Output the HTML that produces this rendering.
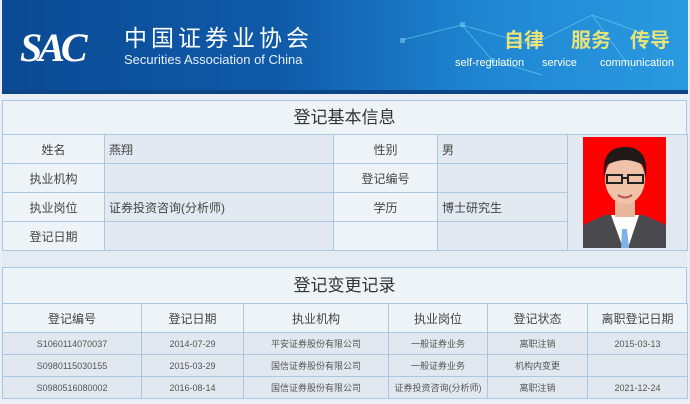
<!DOCTYPE html>
<html><head><meta charset="utf-8"><style>
*{margin:0;padding:0;box-sizing:border-box}
body{width:690px;height:404px;overflow:hidden;background:#e9eff5;font-family:"Liberation Sans","Noto Sans CJK SC",sans-serif;color:#333;position:relative}
.hdr{position:absolute;left:2px;top:0;width:686px;height:94px;background:linear-gradient(90deg,#0b4a94 0%,#0f5aa8 40%,#1f86d2 70%,#2a9ae0 100%);overflow:hidden}
.hdr .bot{position:absolute;left:0;right:0;bottom:0;height:4px;background:#0c4585}
.abs{position:absolute;line-height:1;white-space:nowrap}
table{border-collapse:collapse;position:absolute;left:2px;width:685px;table-layout:fixed}
td{border:1px solid #a9c6e3;text-align:center;font-size:12px;color:#444}
.t1 td{height:29px}
.lbl{background:#eef3f8}
.val{background:#e2e9f1;text-align:left;padding-left:4px}
.title{position:absolute;left:2px;width:685px;text-align:center;font-size:17px;color:#333;background:#eef3f8;border:1px solid #a9c6e3}
.t2 td{height:22px;font-size:9px;color:#555;background:#e2e8f0}
.t2 tr.h td{height:29px;font-size:12px;color:#444;background:#eef3f8}
</style></head><body>
<div class="hdr">
<svg class="abs" style="left:380px;top:0" width="306" height="90"><g stroke="#6fd0f0" stroke-width="1" fill="none" opacity=".6"><path d="M20 40 L80 25 L150 45 L210 15 L280 40 M80 25 L110 60 L160 75 M210 15 L250 70"/></g><g fill="#7ad6f2" opacity=".5"><rect x="18" y="38" width="5" height="5"/><rect x="78" y="22" width="5" height="5"/><rect x="148" y="42" width="5" height="5"/><rect x="108" y="58" width="5" height="5"/></g></svg>
<div class="abs" style="left:18px;top:24px;font:italic bold 40px 'Liberation Serif',serif;color:#fff;letter-spacing:-4px">SAC</div>
<div class="abs" style="left:122px;top:27px;font-size:23px;color:#fff;letter-spacing:4px">中国证券业协会</div>
<div class="abs" style="left:122px;top:53px;font-size:13px;color:#e8f0ff">Securities Association of China</div>
<div class="abs" style="left:502px;top:31px;font-size:20px;color:#e8e27a;font-weight:bold">自律</div>
<div class="abs" style="left:569px;top:31px;font-size:20px;color:#e8e27a;font-weight:bold">服务</div>
<div class="abs" style="left:628px;top:31px;font-size:20px;color:#e8e27a;font-weight:bold">传导</div>
<div class="abs" style="left:453px;top:58px;font-size:11px;color:#fff">self-regulation</div>
<div class="abs" style="left:540px;top:58px;font-size:11px;color:#fff">service</div>
<div class="abs" style="left:598px;top:58px;font-size:11px;color:#fff">communication</div>
<div class="bot"></div>
</div>
<div class="title" style="top:100px;height:35px;line-height:33px">登记基本信息</div>
<table class="t1" style="top:134px">
<colgroup><col style="width:102px"><col style="width:229px"><col style="width:104px"><col style="width:130px"><col style="width:120px"></colgroup>
<tr><td class="lbl">姓名</td><td class="val">燕翔</td><td class="lbl">性别</td><td class="val">男</td><td class="val" rowspan="4" style="padding:0;text-align:center"></td></tr>
<tr><td class="lbl">执业机构</td><td class="val"></td><td class="lbl">登记编号</td><td class="val"></td></tr>
<tr><td class="lbl">执业岗位</td><td class="val">证券投资咨询(分析师)</td><td class="lbl">学历</td><td class="val">博士研究生</td></tr>
<tr><td class="lbl">登记日期</td><td class="val"></td><td class="lbl"></td><td class="val"></td></tr>
</table>
<svg class="abs" style="left:583px;top:137px" width="83" height="111"><rect width="83" height="111" fill="#f00"/>
<path d="M0 111 L0 88 L22 78 L61 78 L83 88 L83 111Z" fill="#4a4a4e"/>
<path d="M28 78 L40 111 L45 111 L56 78Z" fill="#fff"/>
<path d="M39 92 L44 92 L46 111 L38 111Z" fill="#7fb3e6"/>
<rect x="32" y="58" width="20" height="22" fill="#e9b69b"/>
<ellipse cx="42" cy="42" rx="20" ry="25" fill="#f0c2a8"/>
<path d="M21 40 Q18 10 42 10 Q66 10 63 40 L60 28 Q42 18 24 28Z" fill="#1f1a18"/>
<g stroke="#222" stroke-width="2" fill="none"><rect x="24" y="38" width="15" height="8"/><rect x="45" y="38" width="15" height="8"/><path d="M39 41 L45 41"/></g>
<path d="M35 58 Q42 63 49 58" stroke="#b55" stroke-width="2" fill="none"/>
</svg>
<div class="abs" style="left:2px;top:251px;width:685px;height:16px;background:#e4ebf3"></div>
<div class="title" style="top:267px;height:37px;line-height:36px">登记变更记录</div>
<table class="t2" style="top:303px">
<colgroup><col style="width:139px"><col style="width:102px"><col style="width:145px"><col style="width:99px"><col style="width:100px"><col style="width:100px"></colgroup>
<tr class="h"><td>登记编号</td><td>登记日期</td><td>执业机构</td><td>执业岗位</td><td>登记状态</td><td>离职登记日期</td></tr>
<tr><td>S1060114070037</td><td>2014-07-29</td><td>平安证券股份有限公司</td><td>一般证券业务</td><td>离职注销</td><td>2015-03-13</td></tr>
<tr><td>S0980115030155</td><td>2015-03-29</td><td>国信证券股份有限公司</td><td>一般证券业务</td><td>机构内变更</td><td></td></tr>
<tr><td>S0980516080002</td><td>2016-08-14</td><td>国信证券股份有限公司</td><td>证券投资咨询(分析师)</td><td>离职注销</td><td>2021-12-24</td></tr>
</table>
</body></html>
